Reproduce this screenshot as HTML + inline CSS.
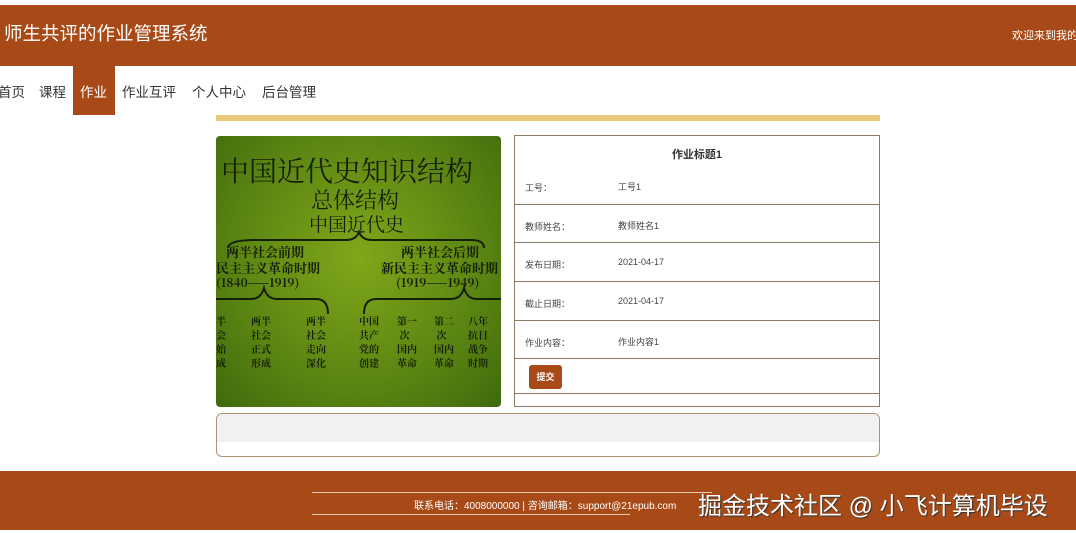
<!DOCTYPE html>
<html><head><meta charset="utf-8"><style>
*{margin:0;padding:0;box-sizing:border-box}
body{width:1076px;height:533px;background:#fff;font-family:"Liberation Sans","Noto Sans CJK SC",sans-serif;position:relative;overflow:hidden}
.hdr{position:absolute;left:0;top:5px;width:1076px;height:61px;background:#a84a17}
.hdr .t{position:absolute;left:4px;top:15px;color:#fff;font-size:18.5px}
.hdr .w{position:absolute;left:1012px;top:22px;color:#fff;font-size:11px;white-space:nowrap}
.nav{position:absolute;top:66px;left:0;height:49px}
.nav span{position:absolute;top:15px;font-size:13.5px;color:#333;white-space:nowrap}
.act{position:absolute;left:73px;top:66px;width:42px;height:49px;background:#a84a17}
.bar{position:absolute;left:216px;top:115px;width:664px;height:6px;background:#e9c97a}
.img{position:absolute;left:216px;top:136px;width:285px;height:271px;border-radius:4px;background:radial-gradient(ellipse at 50% 45%,#7fa71a,#5b8512 60%,#3f6a0d);overflow:hidden;color:#15200a;font-family:"Noto Serif CJK SC",serif;font-weight:bold}
.img div{position:absolute;white-space:nowrap}
.tbl{position:absolute;left:514px;top:135px;width:366px;height:272px;border:1px solid #8a7a66}
.row{position:absolute;left:0;width:364px;border-top:1px solid #8a7a66;font-size:9px;color:#444}
.row .l{position:absolute;left:10px}
.row .v{position:absolute;left:103px}
.btn{position:absolute;left:14px;top:229px;width:33px;height:24px;background:#a84a17;border-radius:3px;color:#fff;font-size:9px;font-weight:bold;text-align:center;line-height:24px}
.box{position:absolute;left:216px;top:413px;width:664px;height:44px;border:1px solid #b09070;border-radius:6px;overflow:hidden}
.box div{height:28px;background:#f1f1f1}
.ftr{position:absolute;left:0;top:471px;width:1076px;height:59px;background:#a84a17}
.ln{position:absolute;left:312px;height:1px;background:#e6cbb0}
</style></head><body>
<div class="hdr"><div class="t">师生共评的作业管理系统</div><div class="w">欢迎来到我的</div></div>
<div class="act"></div>
<div class="nav">
<span style="left:-2px">首页</span><span style="left:39px">课程</span><span style="left:80px;color:#fff">作业</span><span style="left:122px">作业互评</span><span style="left:192px">个人中心</span><span style="left:262px">后台管理</span>
</div>
<div class="bar"></div>
<div class="img">
<div style="left:5px;top:14px;font-size:28px;font-weight:normal">中国近代史知识结构</div>
<div style="left:95px;top:48px;font-size:22px;font-weight:normal">总体结构</div>
<div style="left:93px;top:74px;font-size:19px;font-weight:normal">中国近代史</div>
<svg style="position:absolute;left:0;top:0" width="285" height="271" fill="none" stroke="#15200a" stroke-width="2"><path d="M12 112 Q12 104 40 104 L130 104 Q140 104 143 96 Q146 104 156 104 L255 104 Q268 104 268 112"/><path d="M0 163 L35 163 Q45 163 48 152 Q51 163 61 163 L100 163 Q112 163 112 178"/><path d="M148 178 Q148 163 160 163 L235 163 Q245 163 248 152 Q251 163 261 163 L285 163"/></svg>
<div style="left:10px;top:106px;font-size:13px">两半社会前期</div>
<div style="left:0;top:122px;font-size:13px">民主主义革命时期</div>
<div style="left:0;top:138px;font-size:12px">(1840——1919)</div>
<div style="left:185px;top:106px;font-size:13px">两半社会后期</div>
<div style="left:165px;top:122px;font-size:13px">新民主主义革命时期</div>
<div style="left:180px;top:138px;font-size:12px">(1919——1949)</div>
<div style="left:0;top:178px;font-size:10px;line-height:14px">半<br>会<br>始<br>成</div>
<div style="left:35px;top:178px;font-size:10px;line-height:14px">两半<br>社会<br>正式<br>形成</div>
<div style="left:90px;top:178px;font-size:10px;line-height:14px">两半<br>社会<br>走向<br>深化</div>
<div style="left:143px;top:178px;font-size:10px;line-height:14px">中国<br>共产<br>党的<br>创建</div>
<div style="left:181px;top:178px;font-size:10px;line-height:14px">第一<br>&nbsp;次<br>国内<br>革命</div>
<div style="left:218px;top:178px;font-size:10px;line-height:14px">第二<br>&nbsp;次<br>国内<br>革命</div>
<div style="left:252px;top:178px;font-size:10px;line-height:14px">八年<br>抗日<br>战争<br>时期</div>
</div>
<div class="tbl">
<div style="position:absolute;top:10px;width:364px;text-align:center;font-size:11px;font-weight:bold;color:#333">作业标题1</div>
<div style="position:absolute;top:45px;font-size:9px;color:#444;left:10px">工号：</div><div style="position:absolute;top:44px;left:103px;font-size:9px;color:#444">工号1</div>
<div class="row" style="top:68px;height:39px"><span class="l" style="top:15px">教师姓名：</span><span class="v" style="top:14px">教师姓名1</span></div>
<div class="row" style="top:106px;height:39px"><span class="l" style="top:15px">发布日期：</span><span class="v" style="top:14px">2021-04-17</span></div>
<div class="row" style="top:145px;height:39px"><span class="l" style="top:15px">截止日期：</span><span class="v" style="top:14px">2021-04-17</span></div>
<div class="row" style="top:184px;height:38px"><span class="l" style="top:15px">作业内容：</span><span class="v" style="top:14px">作业内容1</span></div>
<div class="row" style="top:222px;height:35px"></div>
<div class="row" style="top:257px;height:13px"></div>
<div class="btn">提交</div>
</div>
<div class="box"><div></div></div>
<div class="ftr">
<div class="ln" style="top:21px;width:400px"></div>
<div class="ln" style="top:43px;width:318px"></div>
<div style="position:absolute;left:414px;top:26px;color:#fff;font-size:10px;white-space:nowrap">联系电话：4008000000 | 咨询邮箱：support@21epub.com</div>
<div style="position:absolute;left:698px;top:15px;color:#fff;font-size:24px;white-space:nowrap;text-shadow:1px 1px 1px #333">掘金技术社区 @ 小飞计算机毕设</div>
</div>
</body></html>
